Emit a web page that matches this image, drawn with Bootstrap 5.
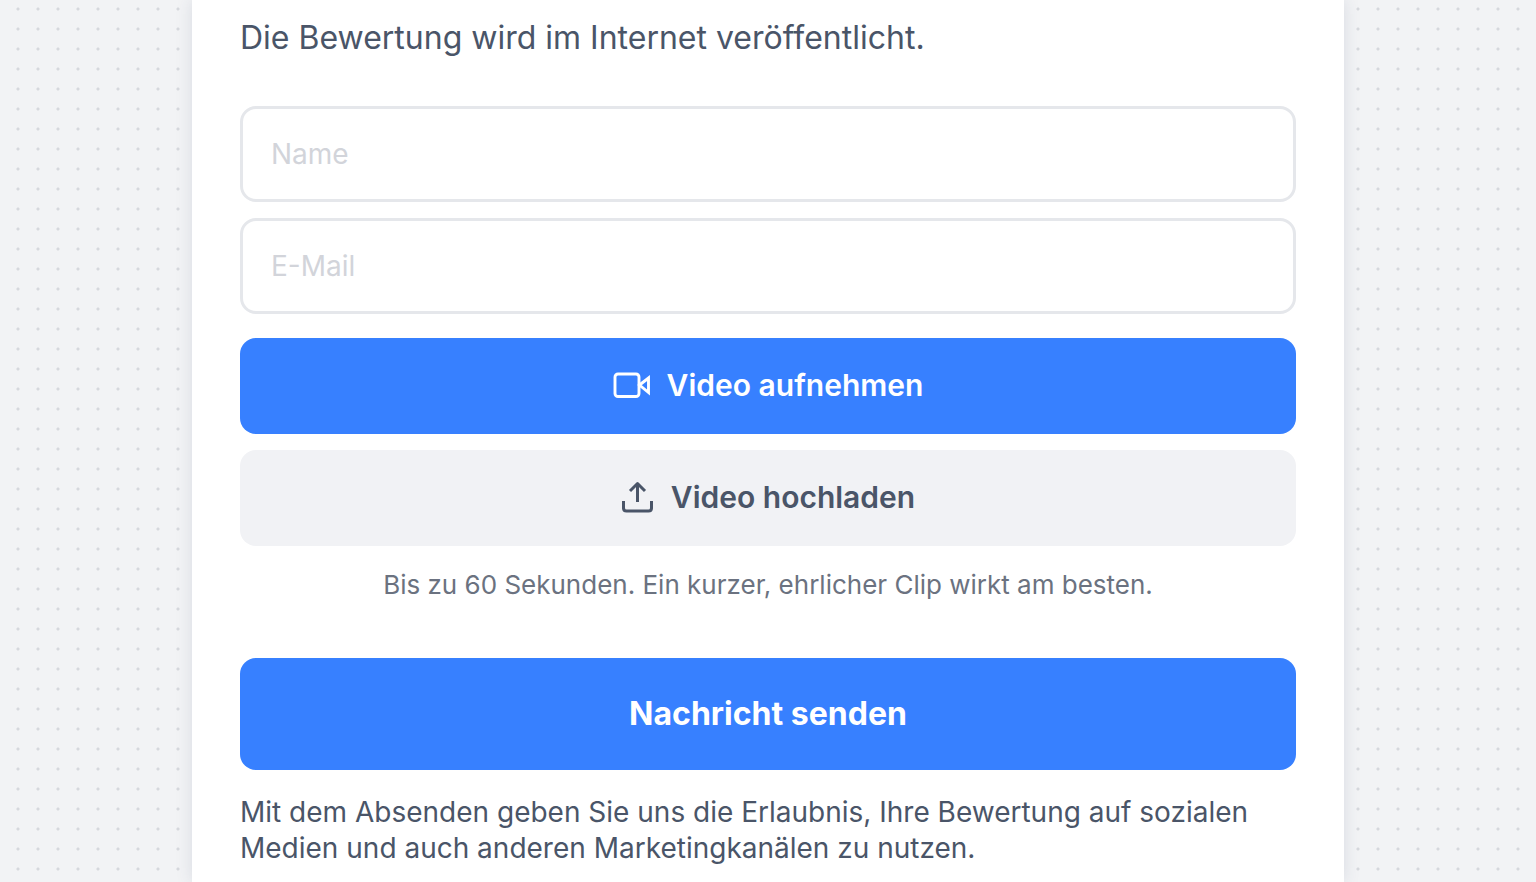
<!DOCTYPE html>
<html lang="de">
<head>
<meta charset="utf-8">
<meta name="viewport" content="width=device-width, initial-scale=1">
<title>Bewertung abgeben</title>
<link href="https://cdn.jsdelivr.net/npm/bootstrap@5.3.0/dist/css/bootstrap.min.css" rel="stylesheet">
<style>
body{font-family:Inter,"Liberation Sans",sans-serif;color:#4a5568;background:#f2f3f5 radial-gradient(circle at 10px 10px,#d6d8dd 1px,transparent 2px) 8px -1px/20px 20px}
.review-panel{width:75%;min-height:100vh;padding:16px 48px 14px;box-shadow:0 0 16px rgba(50,60,100,.13)}
.intro-text{font-size:32px;line-height:44px;margin-bottom:46px}
.review-input{height:96px;border:3px solid #e5e7eb;border-radius:16px;padding:0 28px;font-size:28px}
.review-input::placeholder{color:#d2d4da}
.review-btn{height:96px;border:0;border-radius:16px;padding:0 12px 2px;font-size:30px;font-weight:600}
.btn-blue,.btn-blue:hover{background:#3780ff;color:#fff}
.btn-pale,.btn-pale:hover{background:#f1f2f5;color:#4a5568}
.btn-send{height:112px;padding:0;font-size:32px;font-weight:700}
.hint-text{font-size:26px;line-height:36px;color:#6b7280;margin:5px 0 55px}
.consent-text{font-size:28px;line-height:36px}
</style>
</head>
<body>
<main class="review-panel bg-white mx-auto">
<p class="intro-text">Die Bewertung wird im Internet veröffentlicht.</p>
<form>
<div class="d-flex flex-column gap-3 mb-4">
<input class="form-control review-input" type="text" placeholder="Name" aria-label="Name">
<input class="form-control review-input" type="email" placeholder="E-Mail" aria-label="E-Mail">
</div>
<div class="d-flex flex-column gap-3">
<button type="button" class="btn btn-blue review-btn d-flex align-items-center justify-content-center gap-3"><svg width="38" height="28" viewBox="0 0 38 28" fill="none" stroke="currentColor" stroke-width="2.900" aria-hidden="true"><rect x="2" y="3" width="24" height="22.5" rx="3"/><path d="M26.500 14l9-7v14.500z"/></svg>Video aufnehmen</button>
<button type="button" class="btn btn-pale review-btn d-flex align-items-center justify-content-center gap-3"><svg width="34" height="34" viewBox="0 0 34 34" fill="none" stroke="currentColor" stroke-width="3" stroke-linejoin="round" aria-hidden="true"><path d="M2.500 21v7q0 3 3 3h22q3 0 3-3v-7M16.500 22V4M9 11l7.500-7.500L24 11"/></svg>Video hochladen</button>
<p class="hint-text text-center">Bis zu 60 Sekunden. Ein kurzer, ehrlicher Clip wirkt am besten.</p>
</div>
<button type="submit" class="btn btn-blue review-btn btn-send w-100 mb-4">Nachricht senden</button>
<p class="consent-text mb-0">Mit dem Absenden geben Sie uns die Erlaubnis, Ihre Bewertung auf sozialen Medien und auch anderen Marketingkanälen zu nutzen.</p>
</form>
</main>
<script src="https://cdn.jsdelivr.net/npm/bootstrap@5.3.0/dist/js/bootstrap.bundle.min.js"></script>
</body>
</html>
